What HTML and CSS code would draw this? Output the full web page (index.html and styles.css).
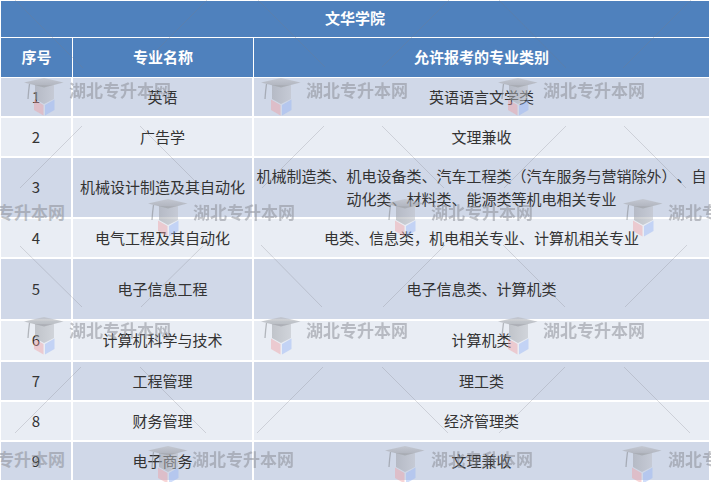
FILE: index.html
```html
<!DOCTYPE html>
<html lang="zh">
<head>
<meta charset="utf-8">
<title>文华学院</title>
<link rel="stylesheet" href="styles.css">
</head>
<body>
<div class="page">
<table class="majors">
  <colgroup><col class="c1"><col class="c2"><col class="c3"></colgroup>
  <thead>
    <tr class="title"><th colspan="3">文华学院</th></tr>
    <tr class="head"><th>序号</th><th>专业名称</th><th>允许报考的专业类别</th></tr>
  </thead>
  <tbody>
    <tr class="odd h40"><td>1</td><td>英语</td><td>英语语言文学类</td></tr>
    <tr class="even h40"><td>2</td><td>广告学</td><td>文理兼收</td></tr>
    <tr class="odd h61"><td>3</td><td>机械设计制造及其自动化</td><td>机械制造类、机电设备类、汽车工程类（汽车服务与营销除外）、自动化类、材料类、能源类等机电相关专业</td></tr>
    <tr class="even h40"><td>4</td><td>电气工程及其自动化</td><td>电类、信息类，机电相关专业、计算机相关专业</td></tr>
    <tr class="odd h62"><td>5</td><td>电子信息工程</td><td>电子信息类、计算机类</td></tr>
    <tr class="even h41"><td>6</td><td>计算机科学与技术</td><td>计算机类</td></tr>
    <tr class="odd h40"><td>7</td><td>工程管理</td><td>理工类</td></tr>
    <tr class="even h40"><td>8</td><td>财务管理</td><td>经济管理类</td></tr>
    <tr class="odd h40"><td>9</td><td>电子商务</td><td>文理兼收</td></tr>
  </tbody>
</table>

<svg class="watermark" width="711" height="482" viewBox="0 0 711 482" aria-hidden="true">
  <defs>
    <linearGradient id="capfill" x1="0" y1="0" x2="0" y2="1">
      <stop offset="0" stop-color="#bcbfc5"/>
      <stop offset="1" stop-color="#9a9da3"/>
    </linearGradient>
    <linearGradient id="capbody" x1="0" y1="0" x2="1" y2="0">
      <stop offset="0" stop-color="#9fa2a8"/>
      <stop offset="1" stop-color="#bcbfc5"/>
    </linearGradient>
    <symbol id="logo" width="40" height="38" viewBox="0 0 40 38" overflow="visible">
      <path d="M11 7 L30 7 L30 21 L20 26 L11 21 Z" fill="url(#capbody)" opacity=".55"/>
      <path d="M0 4.500 L20 0 L39.500 4.500 L20 9.500 Z" fill="url(#capfill)" opacity=".65"/>
      <path d="M5.500 6 Q4.500 13 4 21" fill="none" stroke="#85888e" stroke-width="1.300" opacity=".55"/>
      <path d="M10 21.500 L19.500 27 L19.500 37.500 L10 32 Z" fill="#ee9a9e" opacity=".42"/>
      <path d="M21 27 L30.500 21.500 L30.500 32 L21 37.500 Z" fill="#8fb1f5" opacity=".42"/>
    </symbol>
  </defs>
  <g class="wm-lines">
    <path d="M15 0L83 68M207 0L140 67M258 0L325 67M449 0L382 67M499 0L566 68M691 0L623 68"/>
    <path d="M82 126L20 188M140 126L202 188M324 126L262 188M382 126L444 188M566 126L504 188M624 126L686 188"/>
    <path d="M20 246L82 307M203 246L141 307M261 245L322 307M445 245L383 307M503 245L565 307M687 245L625 307"/>
    <path d="M81 367L15 433M140 367L206 433M323 367L257 433M382 367L448 433M565 367L499 433M624 367L690 433"/>
  </g>
  <g class="wm-logos">
    <use href="#logo" x="24" y="78"/><use href="#logo" x="261" y="78"/><use href="#logo" x="498" y="78"/>
    <use href="#logo" x="148" y="199"/><use href="#logo" x="385" y="199"/><use href="#logo" x="623" y="199"/>
    <use href="#logo" x="24" y="317"/><use href="#logo" x="261" y="317"/><use href="#logo" x="498" y="317"/>
    <use href="#logo" x="148" y="446"/><use href="#logo" x="385" y="446"/><use href="#logo" x="622" y="446"/>
  </g>
  <g class="wm-text">
    <text x="69" y="97">湖北专升本网</text><text x="306" y="97">湖北专升本网</text><text x="543" y="97">湖北专升本网</text>
    <text x="-37" y="219">湖北专升本网</text><text x="193" y="219">湖北专升本网</text><text x="431" y="219">湖北专升本网</text><text x="668" y="219">湖北专升本网</text>
    <text x="69" y="337">湖北专升本网</text><text x="306" y="337">湖北专升本网</text><text x="543" y="337">湖北专升本网</text>
    <text x="-37" y="466">湖北专升本网</text><text x="192" y="466">湖北专升本网</text><text x="431" y="466">湖北专升本网</text><text x="668" y="466">湖北专升本网</text>
  </g>
</svg>
</div>
</body>
</html>
```

FILE: styles.css
```css
html, body {
  margin: 0;
  padding: 0;
  background: #fff;
}
.page {
  position: relative;
  width: 711px;
  height: 482px;
  overflow: hidden;
}
.majors {
  margin: 1px 0 0 1px;
  width: 708px;
  table-layout: fixed;
  border-collapse: separate;
  border-spacing: 0;
  font-family: "Noto Sans CJK SC", "Liberation Sans", sans-serif;
  font-size: 15px;
  line-height: 23px;
  color: #333;
  text-align: center;
  text-spacing-trim: space-all;
}
.c1 { width: 72px; }
.c2 { width: 181px; }
.c3 { width: 455px; }
th, td {
  box-sizing: border-box;
  padding: 0 0 2px;
  font-weight: normal;
  vertical-align: middle;
}
th {
  background: #4f81bd;
  color: #fff;
  font-weight: 700;
  font-size: 15px;
  border-bottom: 1px solid #fff;
  border-right: 1px solid #fff;
}
th:last-child { border-right: 0; }
.title th { height: 37px; padding-bottom: 4px; }
.head th { height: 40px; }
td {
  border-right: 2px solid #fff;
  border-bottom: 2px solid #fff;
}
td:last-child { border-right: 0; }
.odd td { background: #d0d8e8; }
.even td { background: #e9edf4; }
.h40 td { height: 40px; }
.h41 td { height: 41px; }
.h61 td { height: 61px; }
.h62 td { height: 62px; }
.watermark {
  position: absolute;
  left: 0;
  top: 0;
  pointer-events: none;
}
.wm-lines path {
  fill: none;
  stroke: #7a7c84;
  stroke-width: 1;
  opacity: .25;
}
.wm-logos {
  filter: blur(0.4px);
}
.wm-text text {
  font-family: "Noto Sans CJK SC", sans-serif;
  font-size: 17px;
  font-weight: 700;
  fill: #85888f;
  opacity: .5;
}
```
